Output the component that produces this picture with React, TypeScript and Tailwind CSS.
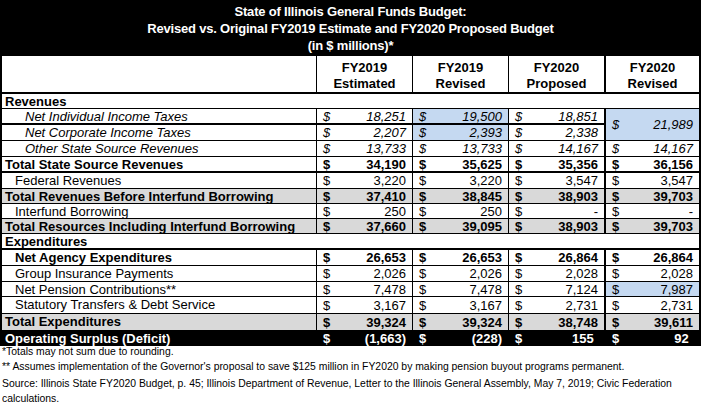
type Kind = "section" | "italic" | "item" | "bold" | "grey" | "black";

type Row = {
  label: string;
  kind: Kind;
  indent?: string;
  vals?: string[];
  h: string;
  thick?: boolean;
  blue?: boolean[];
};

const rows: Row[] = [
  { label: "Revenues", kind: "section", h: "h-[15px]" },
  { label: "Net Individual Income Taxes", kind: "italic", indent: "pl-[23px]", vals: ["18,251", "19,500", "18,851", "21,989"], h: "h-[16px]", thick: true, blue: [false, true, false, true] },
  { label: "Net Corporate Income Taxes", kind: "italic", indent: "pl-[23px]", vals: ["2,207", "2,393", "2,338"], h: "h-[16px]", blue: [false, true, false] },
  { label: "Other State Source Revenues", kind: "italic", indent: "pl-[23px]", vals: ["13,733", "13,733", "14,167", "14,167"], h: "h-[16px]" },
  { label: "Total State Source Revenues", kind: "bold", indent: "pl-[3px]", vals: ["34,190", "35,625", "35,356", "36,156"], h: "h-[16px]", thick: true },
  { label: "Federal Revenues", kind: "item", indent: "pl-[13px]", vals: ["3,220", "3,220", "3,547", "3,547"], h: "h-[16px]" },
  { label: "Total Revenues Before Interfund Borrowing", kind: "grey", indent: "pl-[3px]", vals: ["37,410", "38,845", "38,903", "39,703"], h: "h-[15px]" },
  { label: "Interfund Borrowing", kind: "item", indent: "pl-[13px]", vals: ["250", "250", "-", "-"], h: "h-[15px]" },
  { label: "Total Resources Including Interfund Borrowing", kind: "grey", indent: "pl-[3px]", vals: ["37,660", "39,095", "38,903", "39,703"], h: "h-[15px]" },
  { label: "Expenditures", kind: "section", h: "h-[16px]", thick: true },
  { label: "Net Agency Expenditures", kind: "bold", indent: "pl-[13px]", vals: ["26,653", "26,653", "26,864", "26,864"], h: "h-[16px]" },
  { label: "Group Insurance Payments", kind: "item", indent: "pl-[13px]", vals: ["2,026", "2,026", "2,028", "2,028"], h: "h-[16px]" },
  { label: "Net Pension Contributions**", kind: "item", indent: "pl-[13px]", vals: ["7,478", "7,478", "7,124", "7,987"], h: "h-[15px]", blue: [false, false, false, true] },
  { label: "Statutory Transfers & Debt Service", kind: "item", indent: "pl-[13px]", vals: ["3,167", "3,167", "2,731", "2,731"], h: "h-[17px]" },
  { label: "Total Expenditures", kind: "grey", indent: "pl-[3px]", vals: ["39,324", "39,324", "38,748", "39,611"], h: "h-[17px]" },
  { label: "Operating Surplus (Deficit)", kind: "black", indent: "pl-[3px]", vals: ["(1,663)", "(228)", "155", "92"], h: "h-[15px]" },
];

const textOf: Record<Kind, string> = {
  section: "font-bold",
  italic: "italic",
  item: "",
  bold: "font-bold",
  grey: "font-bold bg-[#d9d9d9]",
  black: "font-bold bg-black text-white",
};

function Money({ v, last, thirdCol, blue, kind, h, thick, span }: { v: string; last?: boolean; thirdCol?: boolean; blue?: boolean; kind: Kind; h: string; thick?: boolean; span?: boolean }) {
  // accounting format leaves room for the closing paren on positive values
  const paren = kind === "black" && !v.startsWith("(");
  return (
    <div
      className={`flex items-center justify-between px-[6px] border-black ${span ? "row-span-2" : h} ${
        kind === "black" ? "" : thick ? "border-b-2" : "border-b"
      } ${last ? "" : thirdCol ? "border-r-2" : "border-r"} ${blue ? "bg-[#c5d9f1]" : ""} ${textOf[kind]}`}
    >
      <span>$</span>
      <span>
        {v}
        {paren && <span className="invisible">)</span>}
      </span>
    </div>
  );
}

export default function App() {
  return (
    <div className="w-[702px] h-[410px] bg-white text-black font-['Liberation_Sans',Arial,sans-serif] text-[13px] leading-[15px]">
      <div className="w-[701px]">
        <div className="h-[56px] bg-black text-white font-bold text-[13px] leading-[17px] tracking-[-0.2px] flex flex-col items-center justify-center">
          <div>State of Illinois General Funds Budget:</div>
          <div>Revised vs. Original FY2019 Estimate and FY2020 Proposed Budget</div>
          <div>(in $ millions)*</div>
        </div>

        <div className="border-x-2 border-black grid grid-cols-[315px_96px_96px_97px_93px]">
          <div className="h-[38px] border-r border-b-2 border-black" />
          {[
            ["FY2019", "Estimated"],
            ["FY2019", "Revised"],
            ["FY2020", "Proposed"],
            ["FY2020", "Revised"],
          ].map(([a, b], i) => (
            <div
              key={i}
              className={`h-[38px] border-b-2 border-black flex flex-col items-center justify-center pt-[4px] font-bold text-[13px] leading-[16px] ${
                i === 3 ? "" : i === 2 ? "border-r-2" : "border-r"
              }`}
            >
              <div>{a}</div>
              <div>{b}</div>
            </div>
          ))}

          {rows.map((r, ri) =>
            r.kind === "section" ? (
              <div key={ri} className={`col-span-5 ${r.h} pl-[3px] font-bold border-black ${r.thick ? "border-b-2" : "border-b"}`}>
                {r.label}
              </div>
            ) : (
              [
                <div
                  key={`${ri}-l`}
                  className={`${r.h} ${r.indent} border-r border-black whitespace-nowrap ${r.kind === "black" ? "" : r.thick ? "border-b-2" : "border-b"} ${textOf[r.kind]}`}
                >
                  {r.label}
                </div>,
                ...(r.vals ?? []).map((v, ci) => (
                  <Money
                    key={`${ri}-${ci}`}
                    v={v}
                    kind={r.kind}
                    h={r.h}
                    thick={r.thick && !(ri === 1 && ci === 3)}
                    last={ci === 3}
                    thirdCol={ci === 2}
                    blue={r.blue?.[ci]}
                    span={ri === 1 && ci === 3}
                  />
                )),
              ]
            )
          )}
        </div>
      </div>

      <div className="pl-[2px] text-[10.4px] leading-[12px]">
        <div className="pt-[0px]">*Totals may not sum due to rounding.</div>
        <div className="mt-[3px]">** Assumes implementation of the Governor's proposal to save $125 million in FY2020 by making pension buyout programs permanent.</div>
        <div className="mt-[3px] leading-[15px] w-[695px]">
          Source: Illinois State FY2020 Budget, p. 45; Illinois Department of Revenue, Letter to the Illinois General Assembly, May 7, 2019; Civic Federation calculations.
        </div>
      </div>
    </div>
  );
}
